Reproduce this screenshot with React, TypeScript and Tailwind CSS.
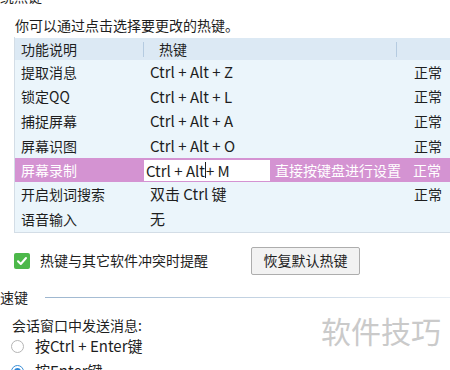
import React from "react";

const rows = [
  { name: "提取消息", key: "Ctrl + Alt + Z", status: "正常" },
  { name: "锁定QQ", key: "Ctrl + Alt + L", status: "正常" },
  { name: "捕捉屏幕", key: "Ctrl + Alt + A", status: "正常" },
  { name: "屏幕识图", key: "Ctrl + Alt + O", status: "正常" },
  { name: "屏幕录制", key: "", status: "正常", active: true },
  { name: "开启划词搜索", key: "双击 Ctrl 键", status: "正常" },
  { name: "语音输入", key: "无", status: "" },
];

export default function App() {
  return (
    <div
      className="relative w-[450px] h-[370px] overflow-hidden bg-white text-[14px] text-[#1e1e1e]"
      style={{ fontFamily: '"Noto Sans CJK SC", "Noto Sans", sans-serif' }}
    >
      <div className="mt-[-14px] ml-[-14px] h-[20px] leading-[20px]">系统热键</div>
      <div className="mt-[9px] ml-[15px] h-[20px] leading-[20px]">你可以通过点击选择要更改的热键。</div>
      <div className="mt-[2px] ml-[14px] w-[450px] border-l border-b border-[#d3dde6] bg-[#ebf5fb]">
        <div className="flex h-[23px] items-center bg-[#dce9f4] border-t border-white">
          <div className="w-[128px] shrink-0 pl-[6px]">功能说明</div>
          <div className="w-[1px] h-[15px] shrink-0 bg-[#b5cbe0]" />
          <div className="w-[15px] shrink-0" />
          <div className="w-[237px] shrink-0">热键</div>
          <div className="w-[1px] h-[15px] shrink-0 bg-[#b5cbe0]" />
        </div>
        {rows.map((r) =>
          r.active ? (
            <div key={r.name} className="flex h-[24px] items-center bg-[#d493d2] text-white">
              <div className="w-[129px] shrink-0 pl-[6px]">{r.name}</div>
              <div className="w-[126px] shrink-0 h-[21px] bg-white text-[#1e1e1e] pl-[2px] leading-[21px] flex items-center text-[15px]">
                <span>Ctrl + Alt</span>
                <span className="inline-block w-[1px] h-[16px] bg-[#1e1e1e]" />
                <span>+ M</span>
              </div>
              <div className="w-[138px] shrink-0 pl-[5px]">直接按键盘进行设置</div>
              <div className="pl-[5px]">{r.status}</div>
            </div>
          ) : (
            <div key={r.name} className="flex h-[24.6px] items-center">
              <div className="w-[129px] shrink-0 pl-[6px]">{r.name}</div>
              <div className="w-[270px] shrink-0 pl-[6px] text-[15px]">{r.key}</div>
              <div>{r.status}</div>
            </div>
          )
        )}
      </div>
      <div className="mt-[14px] ml-[14px] flex items-center h-[28px]">
        <div className="w-[16px] h-[16px] rounded-[2px] bg-[#4cb84a] flex items-center justify-center">
          <svg width="12" height="12" viewBox="0 0 12 12">
            <path d="M2 6.2 L4.8 9 L10 3" stroke="white" strokeWidth="2" fill="none" strokeLinecap="round" strokeLinejoin="round" />
          </svg>
        </div>
        <div className="ml-[10px] w-[211px]">热键与其它软件冲突时提醒</div>
        <div className="h-[28px] w-[109px] border border-[#adadad] rounded-[2px] bg-[#f2f2f2] flex items-center justify-center">
          恢复默认热键
        </div>
      </div>
      <div className="mt-[13px] flex items-center h-[20px]">
        <div className="ml-[-14px] w-[59px]">快速键</div>
        <div className="flex-1 h-[1px] bg-gradient-to-r from-[#9db6cf] to-[#e8eef4]" />
      </div>
      <div className="mt-[7px] ml-[12px] h-[20px] leading-[20px]">会话窗口中发送消息:</div>
      <div className="mt-[2px] ml-[11px] flex items-center h-[20px]">
        <div className="w-[13px] h-[13px] rounded-full border border-[#b5b5b5] bg-white" />
        <div className="ml-[11px] text-[15px]">按Ctrl + Enter键</div>
      </div>
      <div className="mt-[5px] ml-[11px] flex items-center h-[20px]">
        <div className="w-[13px] h-[13px] rounded-full border border-[#3c8fd6] bg-white flex items-center justify-center">
          <div className="w-[7px] h-[7px] rounded-full bg-[#2b86d8]" />
        </div>
        <div className="ml-[11px] text-[15px]">按Enter键</div>
      </div>
      <div className="absolute left-[321px] top-[312px] text-[30px] leading-[36px] text-[#cacaca]">软件技巧</div>
    </div>
  );
}
